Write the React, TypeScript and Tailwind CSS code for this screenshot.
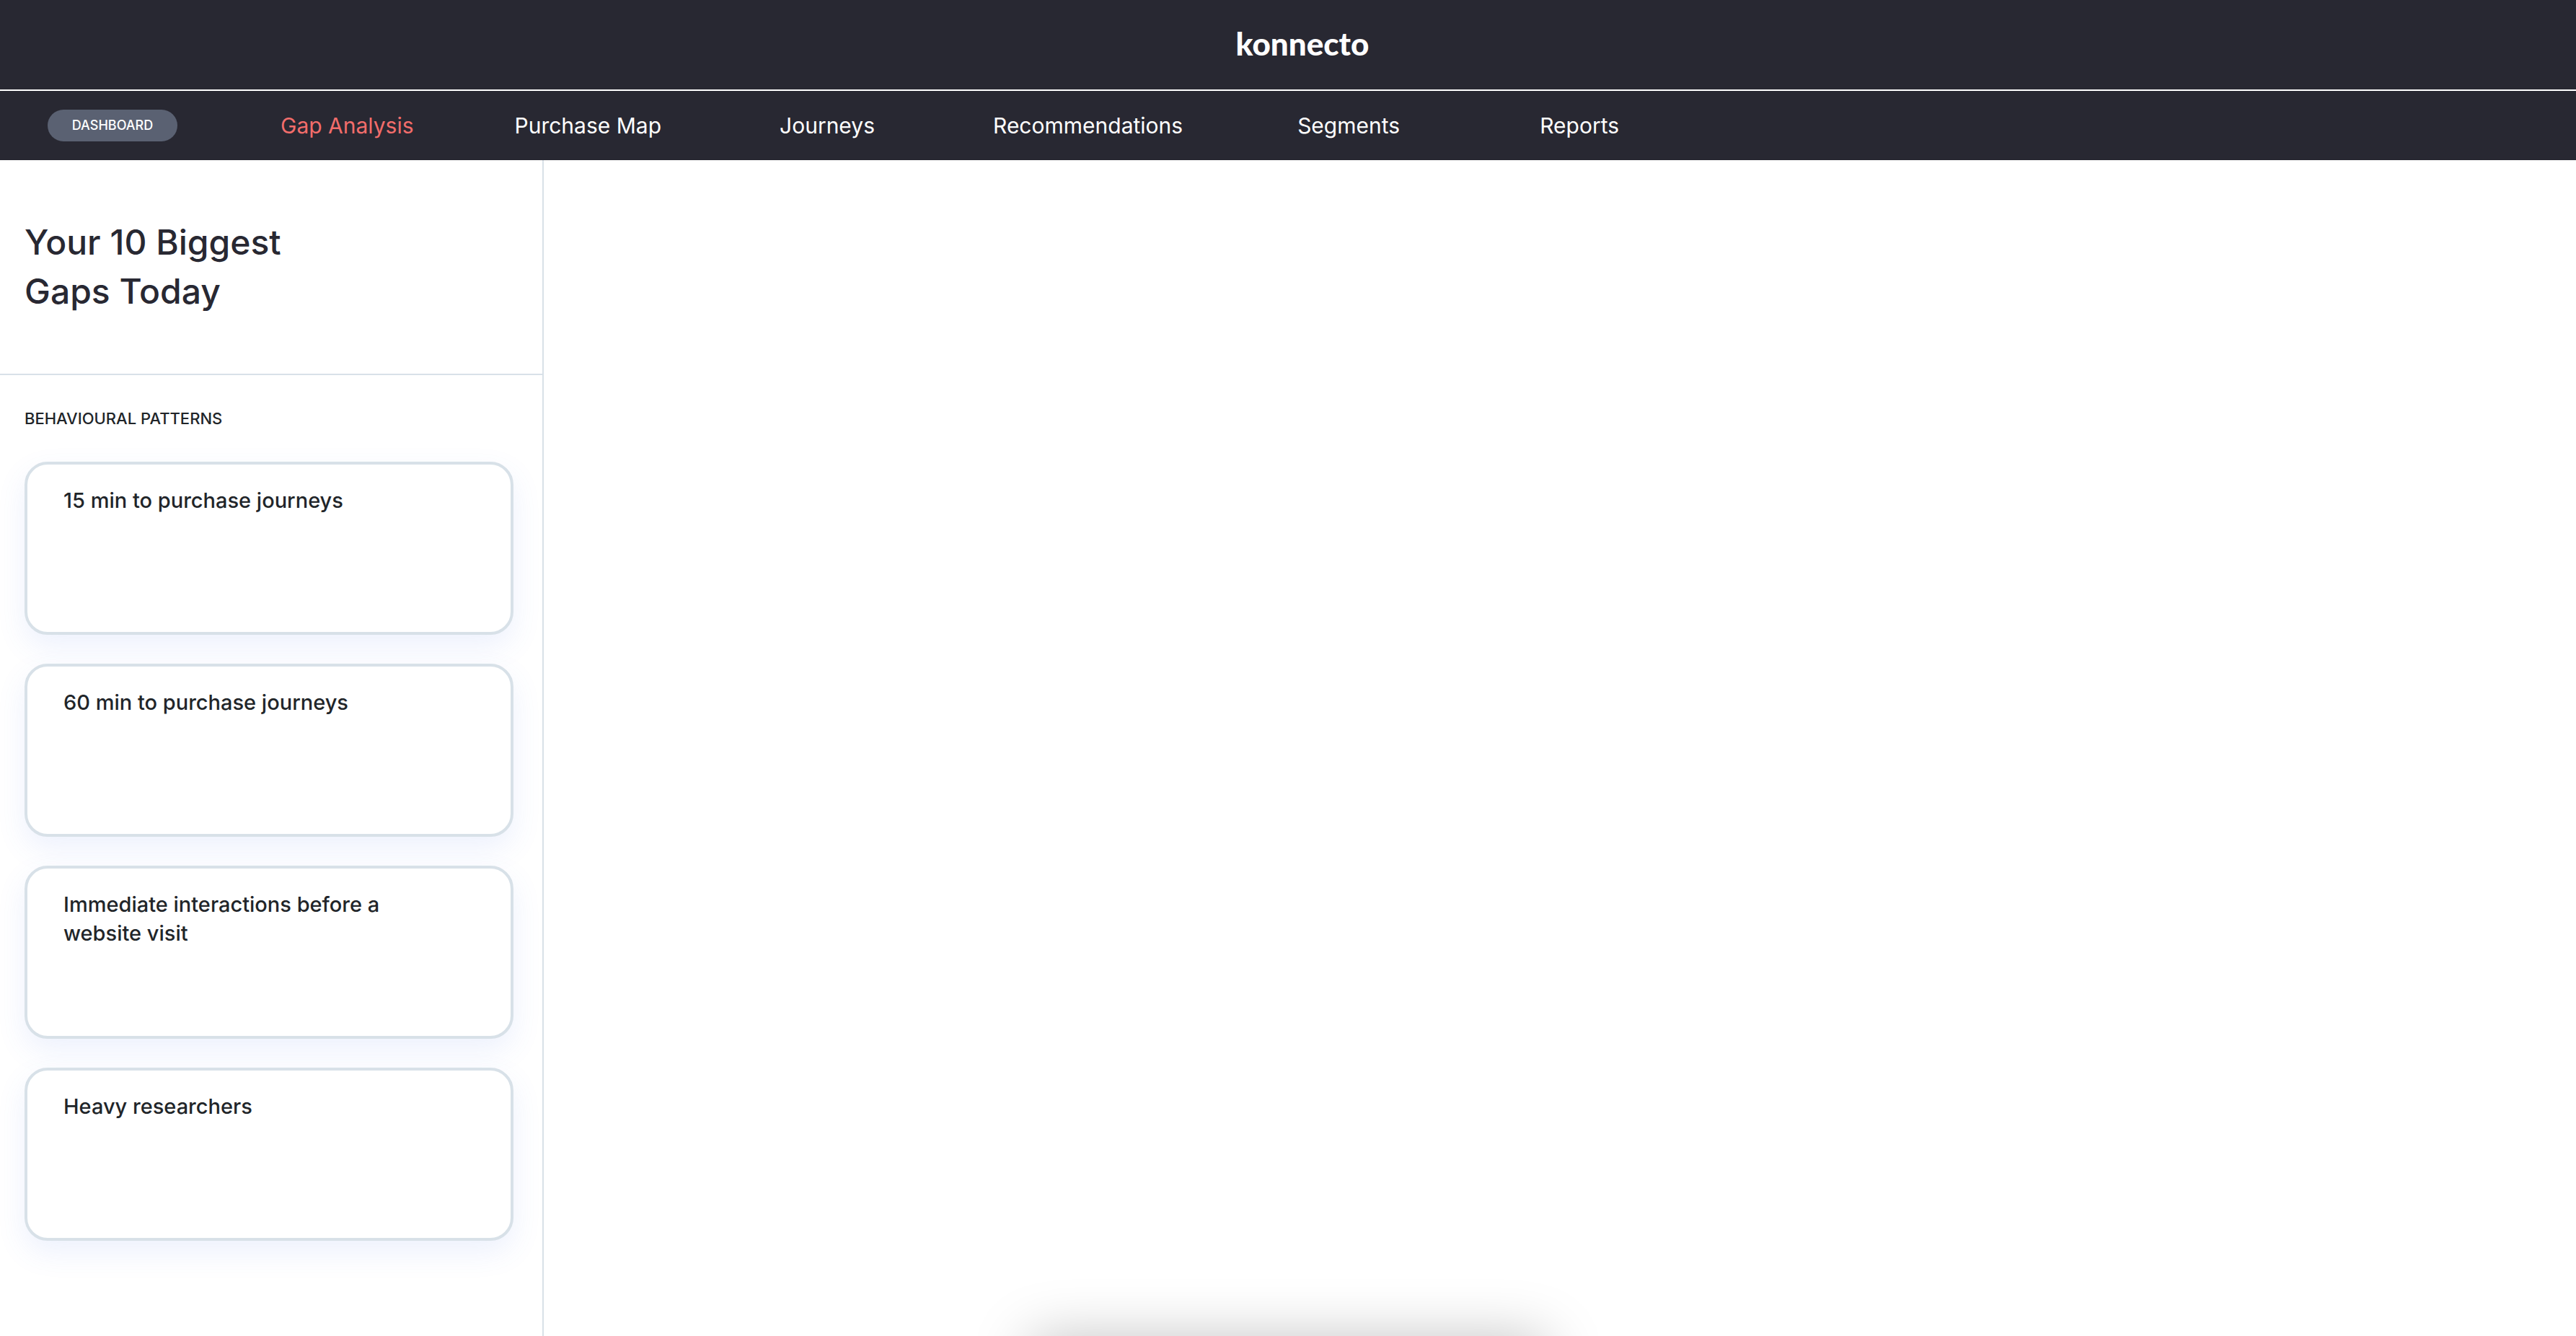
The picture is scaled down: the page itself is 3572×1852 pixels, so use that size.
const tabs = [
  { label: "Gap Analysis", active: true },
  { label: "Purchase Map", active: false },
  { label: "Journeys", active: false },
  { label: "Recommendations", active: false },
  { label: "Segments", active: false },
  { label: "Reports", active: false },
];

const patterns = [
  "15 min to purchase journeys",
  "60 min to purchase journeys",
  "Immediate interactions before a website visit",
  "Heavy researchers",
];

function Header() {
  return (
    <header className="bg-[#282832] text-white">
      <div className="flex h-[124px] justify-center pt-[34px] pl-10">
        <a href="#home" className="font-['Lato',sans-serif] text-[44px] leading-[52px] font-black">
          konnecto
        </a>
      </div>
      <nav aria-label="Main" className="flex h-[98px] items-center border-t-2 border-white pl-[66px]">
        <button
          type="button"
          className="mr-[73px] flex h-11 w-[180px] shrink-0 items-center justify-center rounded-full bg-[#5a6172] text-[18px] leading-7 font-medium"
        >
          DASHBOARD
        </button>
        {tabs.map((tab) => (
          <a
            key={tab.label}
            href="#tab"
            aria-current={tab.active ? "page" : undefined}
            className={
              tab.active
                ? "min-w-[320px] px-[70px] text-center text-[30px] leading-10 whitespace-nowrap text-[#f26d6b]"
                : "min-w-[320px] px-[70px] text-center text-[30px] leading-10 whitespace-nowrap"
            }
          >
            {tab.label}
          </a>
        ))}
      </nav>
    </header>
  );
}

function PatternCard({ title }: { title: string }) {
  return (
    <button
      type="button"
      className="flex h-[240px] w-full items-start rounded-[32px] border-4 border-[#d8e1e8] bg-white pt-[30px] pr-24 pl-[50px] text-left text-[29px] leading-10 font-medium shadow-[0_16px_40px_rgba(80,120,240,0.1)]"
    >
      {title}
    </button>
  );
}

function Sidebar() {
  return (
    <aside className="w-[754px] shrink-0 border-r-2 border-[#d8e1e8]">
      <div className="border-b-2 border-[#d8e1e8] px-[34px] pt-20 pb-20">
        <h1 className="w-[440px] text-[48px] leading-[68px] font-medium text-[#282832]">
          Your 10 Biggest Gaps Today
        </h1>
      </div>
      <div className="pt-10 pr-10 pl-[34px]">
        <h2 className="text-[22px] leading-10 font-medium">BEHAVIOURAL PATTERNS</h2>
        <ul className="mt-10 flex flex-col gap-10">
          {patterns.map((title) => (
            <li key={title}>
              <PatternCard title={title} />
            </li>
          ))}
        </ul>
      </div>
    </aside>
  );
}

export default function App() {
  return (
    <div className="relative flex min-h-screen flex-col overflow-hidden bg-white font-['Inter',sans-serif] text-[#212529]">
      <Header />
      <div className="flex grow">
        <Sidebar />
        <main className="grow" />
      </div>
      {/* Glow of the panel docked just below the window's bottom edge */}
      <div className="absolute top-full left-1/2 h-20 w-[716px] -translate-x-1/2 rounded-2xl shadow-[0_4px_80px_rgba(0,0,0,0.25)]" />
    </div>
  );
}
